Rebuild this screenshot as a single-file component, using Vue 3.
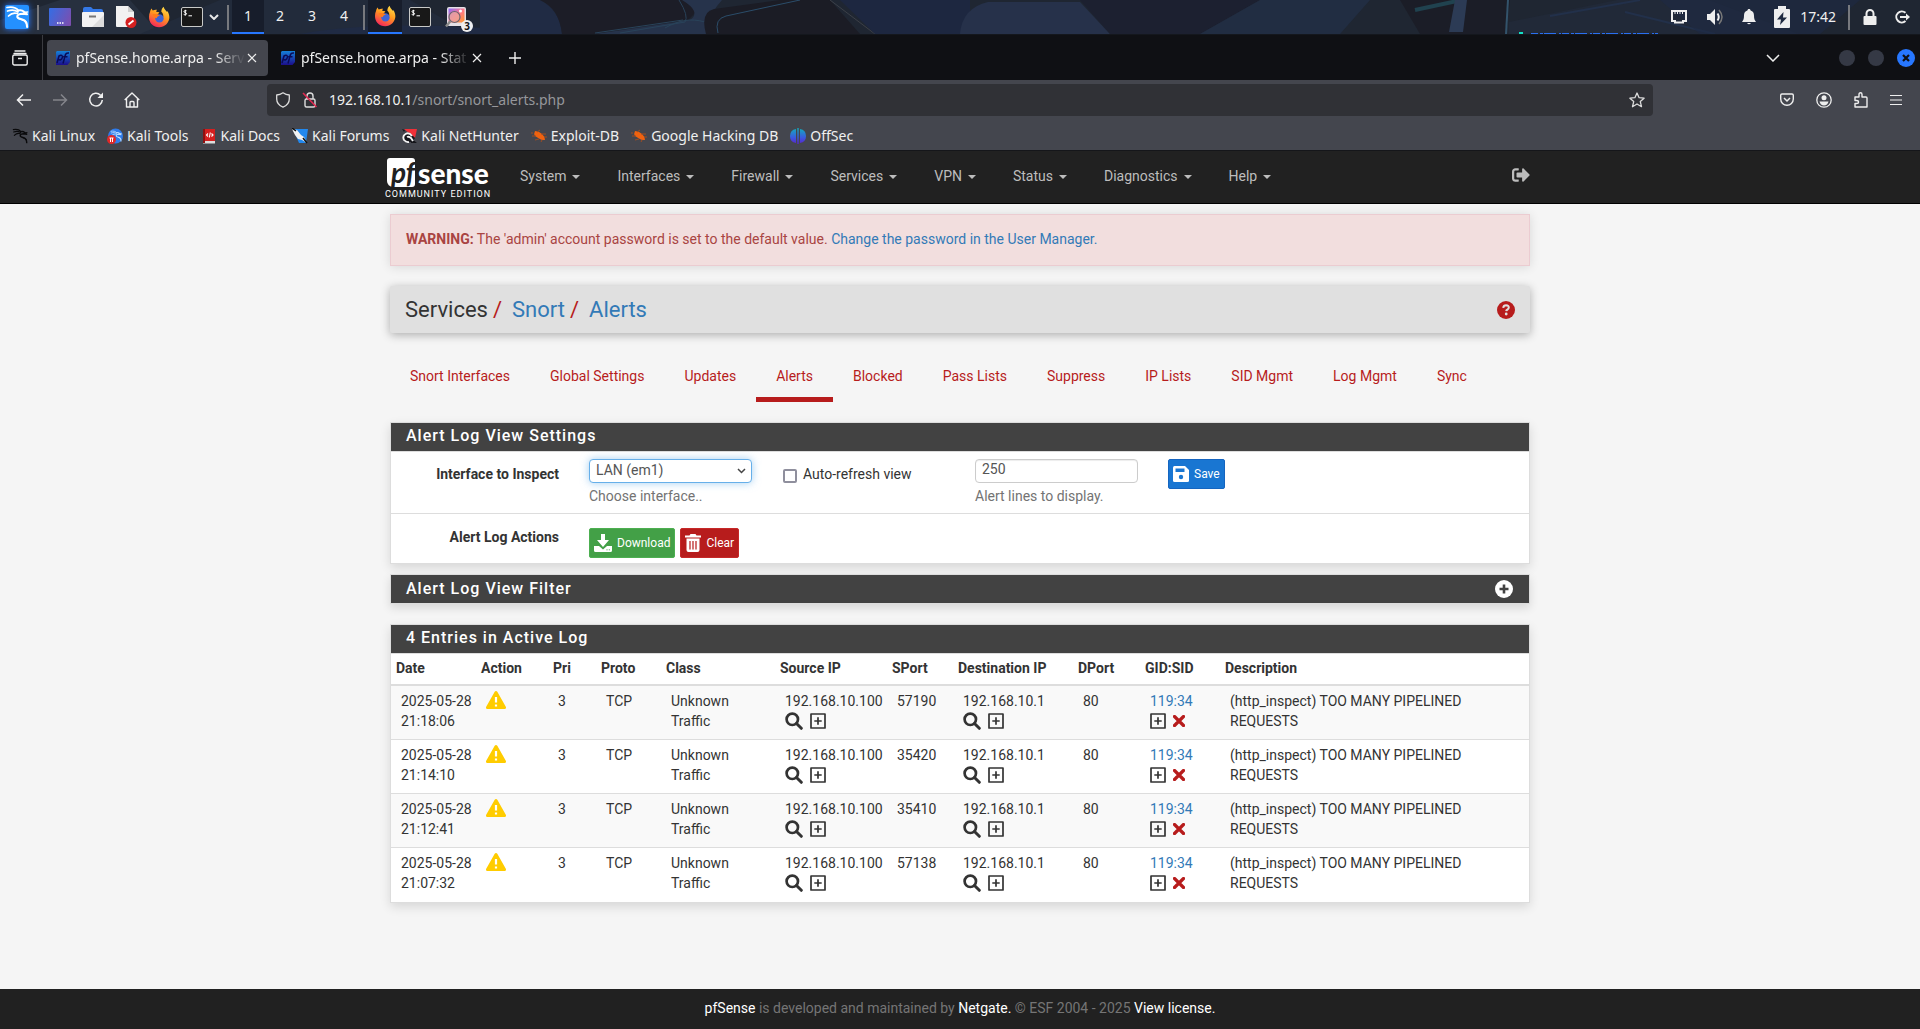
<script setup>
import { ref } from 'vue'

const workspaces = [1, 2, 3, 4]
const tabs = ref([
  { title: 'pfSense.home.arpa - Serv', active: true },
  { title: 'pfSense.home.arpa - Stat', active: false },
])
const bookmarks = [
  { label: 'Kali Linux', icon: 'dragon' },
  { label: 'Kali Tools', icon: 'tools' },
  { label: 'Kali Docs', icon: 'docs' },
  { label: 'Kali Forums', icon: 'forums' },
  { label: 'Kali NetHunter', icon: 'nethunter' },
  { label: 'Exploit-DB', icon: 'bug' },
  { label: 'Google Hacking DB', icon: 'bug' },
  { label: 'OffSec', icon: 'offsec' },
]
const menus = ['System', 'Interfaces', 'Firewall', 'Services', 'VPN', 'Status', 'Diagnostics', 'Help']
const sections = ['Snort Interfaces', 'Global Settings', 'Updates', 'Alerts', 'Blocked', 'Pass Lists', 'Suppress', 'IP Lists', 'SID Mgmt', 'Log Mgmt', 'Sync']
const columns = [
  { name: 'Date', width: 85 },
  { name: 'Action', width: 72 },
  { name: 'Pri', width: 48 },
  { name: 'Proto', width: 65 },
  { name: 'Class', width: 114 },
  { name: 'Source IP', width: 112 },
  { name: 'SPort', width: 66 },
  { name: 'Destination IP', width: 120 },
  { name: 'DPort', width: 67 },
  { name: 'GID:SID', width: 80 },
  { name: 'Description', width: 0 },
]
const alerts = [
  { time: '21:18:06', sport: 57190 },
  { time: '21:14:10', sport: 35420 },
  { time: '21:12:41', sport: 35410 },
  { time: '21:07:32', sport: 57138 },
]
const iface = ref('LAN (em1)')
const lines = ref('250')
const autoRefresh = ref(false)
</script>

<template>
  <svg class="defs" width="0" height="0" aria-hidden="true">
    <defs>
      <linearGradient id="gFox" x1="0.8" y1="0" x2="0.3" y2="1">
        <stop offset="0" stop-color="#ffe14a" /><stop offset="0.45" stop-color="#ff9a1f" /><stop offset="1" stop-color="#f5245c" />
      </linearGradient>
      <linearGradient id="gDesk" x1="0" y1="0.3" x2="1" y2="0.7">
        <stop offset="0" stop-color="#3a6be0" /><stop offset="1" stop-color="#7a4fb0" />
      </linearGradient>
      <linearGradient id="gPf" x1="0" y1="0" x2="0" y2="1">
        <stop offset="0" stop-color="#1580d8" /><stop offset="1" stop-color="#1c0e8c" />
      </linearGradient>
      <linearGradient id="gOff" gradientUnits="userSpaceOnUse" x1="0" y1="0" x2="0" y2="16">
        <stop offset="0" stop-color="#12aebb" /><stop offset="0.6" stop-color="#3a5ae0" /><stop offset="1" stop-color="#5a22cc" />
      </linearGradient>
      <linearGradient id="gPhoto" x1="0" y1="0" x2="1" y2="1">
        <stop offset="0" stop-color="#8a6bff" /><stop offset="0.5" stop-color="#ff7a8c" /><stop offset="1" stop-color="#ff9a2a" />
      </linearGradient>
      <symbol id="dragon" viewBox="0 0 24 24">
        <g fill="none" stroke="currentColor" stroke-width="1.700" stroke-linecap="round" stroke-linejoin="round">
          <path d="M2 2.500c5-1 9 0 11.500 3" />
          <path d="M2.500 6c4-1.500 8-1 10.500 1" />
          <path d="M3.500 11c3-3 6-3.500 9-2.500" />
          <path d="M13 5.500c2.500-.6 4.500-.2 6 1.200l3 2.600-4.500-.6c-2.500.2-4.800.4-5.200 2.400-.4 2.400 2.500 2.800 5 3.400 3 .8 4.700 3 4.800 7.500" stroke-width="2.100" />
          <path d="M19.500 7.500l3-.5M17 14.800c2 .5 3.800 1.500 4.600 3" />
        </g>
      </symbol>
      <symbol id="firefox" viewBox="0 0 24 24">
        <path fill="url(#gFox)" d="M2.200 6.500c.3-1.800 1.200-3 2-3.700.1 1 .5 1.700 1 2.200C7 3.800 9 4 10 4.200 9.300 5 8.900 5.700 8.900 6.300c1 .4 2.300.3 3.400.4-.2 1.200-1 1.900-2.300 2.500 1.200 0 2.400.4 3 1.400 1 0 2.600.4 3.500 1.700C17 9 16 7.500 14.500 6.200 14.600 3.800 15.600 1.900 17 .8c.5 2.700 2.300 3.600 3.800 5.800.2-.6.200-1 .1-1.500 3.200 4.600 3.500 10.400-.8 14.800-4.500 4.500-12.100 4.300-16.300-.3C.700 16.200.400 10.500 2.200 6.500Z" />
        <circle cx="12.500" cy="13.500" r="4.600" fill="#3d63d6" />
        <path fill="#ff7a1a" d="M5 9c2.500-.8 6-.2 8 1.700-2 .4-3.200 1.200-3.500 2.600-2.300-.2-4-1.800-4.500-4.300Z" />
      </symbol>
      <symbol id="terminal" viewBox="0 0 22 20">
        <rect x=".5" y=".5" width="21" height="19" rx="1.500" fill="#181818" stroke="#c9cac8" />
        <path d="M5.500 3.800C4.800 3.400 3 3.500 3 4.600c0 1.300 2.600.8 2.600 2.100 0 1.200-1.900 1.300-2.900.7M4.300 2.800v5.800M7.500 8.800H11" fill="none" stroke="#fff" stroke-width="1" />
      </symbol>
      <symbol id="pf" viewBox="0 0 16 16">
        <path d="M2 1h13v11l-2.500 3H1V2z" fill="url(#gPf)" />
        <path d="M2 13l2-7c2-1.300 4-.8 3.300 1.600C6.700 10 5 10.300 3.500 9.500M8 13.500l2-7.300C10.500 3.500 12 2.600 14 3M8.200 6.800h4.300" fill="none" stroke="#0a0a55" stroke-width="1.500" />
      </symbol>
      <symbol id="plusbox" viewBox="0 0 16 16">
        <path d="M1 1h14v14H1zM8 4.300v7.400M4.300 8h7.400" fill="none" stroke="currentColor" stroke-width="1.700" stroke-linejoin="round" />
      </symbol>
      <symbol id="search" viewBox="0 0 18 18">
        <circle cx="7.300" cy="7.300" r="5.700" fill="none" stroke="currentColor" stroke-width="2.700" />
        <path d="M11.500 11.500l4.800 4.800" stroke="currentColor" stroke-width="3" stroke-linecap="round" />
      </symbol>
      <symbol id="warn" viewBox="0 0 20 18">
        <path fill="#fc0" d="M8.700.8c.6-1 2-1 2.600 0l8.500 14.900c.6 1-.1 2.300-1.300 2.300h-17C.300 18-.400 16.700.200 15.700z" />
        <path d="M10 6v5.600M10 13.400v2" stroke="#fff" stroke-width="2.200" />
      </symbol>
    </defs>
  </svg>

  <div class="screen">
    <header class="panel">
      <svg class="wallpaper" viewBox="0 0 1920 34" preserveAspectRatio="xMidYMid slice" aria-hidden="true">
        <rect width="1920" height="34" fill="#1f2632" />
        <path d="M60 0h70l30 34H0V20z" fill="#27303f" />
        <path d="M140 34L220 0h190l60 34z" fill="#222b3b" />
        <path d="M300 34C380 20 470 26 560 34H300zM480 0h60q20 10 22 34h-82z" fill="#202b44" />
        <path d="M540 0h170q-10 8-22 20l-95 14h-31q-3-26-22-34z" fill="#1c1d27" />
        <path d="M595 34l95-14q12-8-8-20h40q-12 12-15 34z" fill="#26334b" />
        <path d="M595 33l88-13M620 33l65-11q4-6-6-22M665 28c14-8 26-10 40-6" fill="none" stroke="#29435a" />
        <path d="M706 34q-6-22 8-25L780 0h50l30 34z" fill="#1b1c25" />
        <path d="M718 33q-4-14 8-17L800 0" fill="none" stroke="#2b4d6a" />
        <path d="M830 0l45 34M845 0l32 24" stroke="#3c4048" />
        <path d="M840 0h130v34h-95z" fill="#1d2740" />
        <path d="M960 34q2-26 28-32h92l30 32z" fill="#26314a" />
        <path d="M1080 0h180l-60 34h-90z" fill="#1c2030" />
        <path d="M1260 0h110l-30 34h-140z" fill="#212d42" />
        <path d="M1400 0h110l-4 34h-86z" fill="#1b1d27" />
        <path d="M1415 10l42-9" stroke="#20424f" stroke-width="4" />
        <path d="M1449 32l6-32h12l-4 32z" fill="#2c3b55" />
        <path d="M1508 0l-2 34" stroke="#33536b" stroke-width="2" />
        <path d="M1509 22l108-22h92l90 34h-290z" fill="#212938" />
        <path d="M1550 16l90-16M1625 12l90 22" stroke="#22304a" stroke-width="2" />
        <path d="M1660 0h200l-40 34h-120z" fill="#1e2a44" opacity=".6" />
        <path d="M1519 33h4" stroke="#15e0c5" stroke-width="2" />
        <path d="M1531 33.500h127" stroke="#2a6ff0" stroke-dasharray="7 2 3 1 12 3 2 1" />
      </svg>
      <div class="panel-row">
        <button class="kali" aria-label="Applications"><svg width="24" height="24"><use href="#dragon" /></svg></button>
        <i class="rule first"></i>
        <button class="launcher" aria-label="Show desktop">
          <svg width="22" height="18" viewBox="0 0 22 18"><rect width="22" height="18" rx="1" fill="url(#gDesk)" /><path d="M8 15h1.500M10.500 15H12M13 15h1.500" stroke="#fff" stroke-width="1.500" /></svg>
        </button>
        <button class="launcher" aria-label="Files">
          <svg width="22" height="20" viewBox="0 0 22 20"><path d="M1 2q0-2 2-2h6l2 2h8q2 0 2 2v4H1z" fill="#3478e6" /><rect y="5" width="22" height="15" rx="1" fill="#f2f2f2" /><path d="M22 8v12H10z" fill="#dcdcdc" /><path d="M7 9.500h7" stroke="#777" stroke-width="2" /></svg>
        </button>
        <button class="launcher" aria-label="Text editor">
          <svg width="22" height="22" viewBox="0 0 22 22"><path d="M1 0h12l6 6v14q0 1-1 1H2q-1 0-1-1z" fill="#f2f2f2" /><path d="M13 0v6h6" fill="#cfcfcf" /><circle cx="16" cy="16.500" r="5.500" fill="#d42020" /><path d="M13.500 18.500l5-4" stroke="#fff" stroke-width="1.800" /></svg>
        </button>
        <button class="launcher" aria-label="Firefox"><svg width="22" height="22"><use href="#firefox" /></svg></button>
        <button class="launcher" aria-label="Terminal"><svg width="22" height="20"><use href="#terminal" /></svg></button>
        <button class="more" aria-label="More launchers"><svg width="10" height="6" viewBox="0 0 10 6"><path d="M1 1l4 4 4-4" fill="none" stroke="#e8e8e8" stroke-width="2" /></svg></button>
        <i class="rule"></i>
        <nav class="spaces">
          <button v-for="n in workspaces" :key="n" :class="{ on: n === 1 }">{{ n }}</button>
        </nav>
        <i class="rule"></i>
        <button class="task on" aria-label="Firefox window"><svg width="22" height="22"><use href="#firefox" /></svg></button>
        <button class="task" aria-label="Terminal window"><svg width="22" height="20"><use href="#terminal" /></svg></button>
        <button class="task shots" aria-label="Image viewer">
          <svg width="22" height="22" viewBox="0 0 22 22"><rect x="2" y="1" width="19" height="19" rx="2" fill="#e4e0e6" /><rect x="3.500" y="2.500" width="16" height="14" fill="url(#gPhoto)" /><circle cx="15.500" cy="5" r="1.500" fill="#fff" /><circle cx="9.500" cy="11" r="5.500" fill="#e8a9a0" fill-opacity=".7" stroke="#6b6570" stroke-width="1.200" /><path d="M5.500 15L1 20.500" stroke="#8a8a8a" stroke-width="2.500" /></svg>
          <span class="count">3</span>
        </button>
        <div class="tray">
          <svg width="18" height="14" viewBox="0 0 18 14"><path d="M2 1h14v10h-3v1.500H5V11H2z" fill="none" stroke="#eee" stroke-width="2" /><path d="M5 2v2M7.500 2v2M10 2v2M12.500 2v2" stroke="#eee" /></svg>
          <svg width="18" height="18" viewBox="0 0 18 18"><path d="M1 6h3l5-5v16l-5-5H1z" fill="#eee" /><path d="M11.500 5.500q2.500 3.500 0 7" fill="none" stroke="#eee" stroke-width="2" /><path d="M13 2q6 7 0 14" fill="none" stroke="#777" stroke-width="1.500" /></svg>
          <svg width="14" height="16" viewBox="0 0 14 16"><path d="M7 0c1 0 1.500.6 1.600 1.500C11 2 12 4 12 6.500c0 3 .5 4.500 2 6.500H0c1.500-2 2-3.500 2-6.500C2 4 3 2 5.400 1.500 5.500.6 6 0 7 0zM5 14h4q-2 2.500-4 0z" fill="#eee" /></svg>
          <svg width="16" height="22" viewBox="0 0 16 22"><path d="M4 0h8v3h3q1 0 1 1v17q0 1-1 1H1q-1 0-1-1V4q0-1 1-1h3z" fill="#eee" /><path d="M9.500 6L3 13.500h4L6 19l7-7.500H9z" fill="#1f2a40" /></svg>
          <time>17:42</time>
          <i class="rule"></i>
          <svg width="14" height="16" viewBox="0 0 14 16"><rect x=".5" y="7" width="13" height="9" rx="1" fill="#eee" /><path d="M3.500 8V4.500a3.500 3.500 0 017 0V8" fill="none" stroke="#eee" stroke-width="2" /></svg>
          <svg width="16" height="14" viewBox="0 0 16 14"><path d="M10.500 2.800A5.500 5.500 0 1010.500 11" fill="none" stroke="#eee" stroke-width="2" /><path d="M5 7h8" stroke="#eee" stroke-width="2" /><path d="M11 3.500L15 7l-4 3.500z" fill="#eee" /></svg>
        </div>
      </div>
    </header>

    <div class="tabstrip">
      <button class="recent" aria-label="Recent browsing">
        <svg width="16" height="16" viewBox="0 0 16 16"><path d="M3 1h10M2 3.500h12" fill="none" stroke="#eee" stroke-width="1.300" stroke-linecap="round" /><rect x=".8" y="5" width="14.400" height="10" rx="1.500" fill="none" stroke="#eee" stroke-width="1.400" /><path d="M6 8.500h4" stroke="#eee" stroke-width="1.500" /></svg>
      </button>
      <div v-for="t in tabs" :key="t.title" class="tab" :class="{ active: t.active }">
        <svg width="16" height="16"><use href="#pf" /></svg>
        <span class="tab-title">{{ t.title }}</span>
        <button class="close" aria-label="Close tab"><svg width="10" height="10" viewBox="0 0 10 10"><path d="M1 1l8 8M9 1L1 9" stroke="#eee" stroke-width="1.200" /></svg></button>
      </div>
      <button class="newtab" aria-label="New tab"><svg width="12" height="12" viewBox="0 0 12 12"><path d="M6 0v12M0 6h12" stroke="#eee" stroke-width="1.400" /></svg></button>
      <div class="window-controls">
        <button class="alltabs" aria-label="List all tabs"><svg width="14" height="8" viewBox="0 0 14 8"><path d="M1 1l6 6 6-6" fill="none" stroke="#eee" stroke-width="1.500" /></svg></button>
        <button class="dot" aria-label="Minimize"></button>
        <button class="dot" aria-label="Maximize"></button>
        <button class="dot shut" aria-label="Close"><svg width="8" height="8" viewBox="0 0 8 8"><path d="M1 1l6 6M7 1L1 7" stroke="#0f1014" stroke-width="2.200" /></svg></button>
      </div>
    </div>

    <div class="toolbar">
      <div class="nav-buttons">
        <button aria-label="Back"><svg width="16" height="16" viewBox="0 0 16 16"><path d="M15 8H2M7 2.500L1.500 8 7 13.500" fill="none" stroke="#f0f0f0" stroke-width="1.500" /></svg></button>
        <button aria-label="Forward"><svg width="16" height="16" viewBox="0 0 16 16"><path d="M1 8h13M9 2.500L14.500 8 9 13.500" fill="none" stroke="#84858b" stroke-width="1.500" /></svg></button>
        <button aria-label="Reload"><svg width="16" height="16" viewBox="0 0 16 16"><path d="M12.500 3.200A6.300 6.300 0 1014.300 8" fill="none" stroke="#f0f0f0" stroke-width="1.500" /><path d="M15 .5v5.500H9.500z" fill="#f0f0f0" /></svg></button>
        <button aria-label="Home"><svg width="16" height="16" viewBox="0 0 16 16"><path d="M.7 8L8 1l7.300 7M2.500 6.500V15h11V6.500M6 15v-4.500q0-1 1-1h2q1 0 1 1V15" fill="none" stroke="#f0f0f0" stroke-width="1.400" stroke-linejoin="round" /></svg></button>
      </div>
      <div class="urlbar">
        <svg width="16" height="16" viewBox="0 0 16 16"><path d="M8 .8q3 2 6.300 2.200v4q0 5.500-6.300 8.200Q1.700 12.500 1.700 7V3Q5 2.800 8 .8z" fill="none" stroke="#ddd" stroke-width="1.300" stroke-linejoin="round" /></svg>
        <svg width="16" height="16" viewBox="0 0 16 16"><rect x="3" y="7" width="10" height="8" rx="1.500" fill="none" stroke="#ddd" stroke-width="1.400" /><path d="M5 7V4a3 3 0 016 0v3" fill="none" stroke="#ddd" stroke-width="1.400" /><path d="M1 1l13.500 14" stroke="#e22850" stroke-width="1.600" /></svg>
        <p class="address">192.168.10.1<span>/snort/snort_alerts.php</span></p>
        <button aria-label="Bookmark this page"><svg width="16" height="16" viewBox="0 0 16 16"><path d="M8 1l2.100 4.700 5 .5-3.800 3.400 1.200 5.100L8 12l-4.500 2.700 1.200-5.100L.9 6.200l5-.5z" fill="none" stroke="#ddd" stroke-width="1.300" stroke-linejoin="round" /></svg></button>
      </div>
      <div class="actions">
        <button aria-label="Save to Pocket"><svg width="14" height="14" viewBox="0 0 14 14"><path d="M2 1h10q1.300 0 1.300 1.300V6a6.300 6.300 0 01-12.600 0V2.300Q.7 1 2 1z" fill="none" stroke="#eee" stroke-width="1.400" /><path d="M4 5l3 3 3-3" fill="none" stroke="#eee" stroke-width="1.500" /></svg></button>
        <button aria-label="Account"><svg width="16" height="16" viewBox="0 0 16 16"><circle cx="8" cy="8" r="7.200" fill="none" stroke="#eee" stroke-width="1.300" /><circle cx="8" cy="5.800" r="2.500" fill="#eee" /><path d="M3.500 9.500h9q-1 4-4.500 4t-4.500-4z" fill="#eee" /></svg></button>
        <button aria-label="Extensions"><svg width="14" height="16" viewBox="0 0 14 16"><path d="M1 5h4V2.500q0-1.700 1.500-1.700T8 2.500V5h4q1 0 1 1v9H1v-3.500h1.500Q4.500 11.500 4.500 10T2.500 8.500H1z" fill="none" stroke="#eee" stroke-width="1.400" stroke-linejoin="round" /></svg></button>
        <button aria-label="Menu"><svg width="12" height="12" viewBox="0 0 12 12"><path d="M0 1.500h12M0 6h12M0 10.500h12" stroke="#eee" stroke-width="1.200" /></svg></button>
      </div>
    </div>

    <nav class="bookmarks">
      <a v-for="b in bookmarks" :key="b.label" href="#">
        <svg width="16" height="16" viewBox="0 0 16 16">
          <use v-if="b.icon === 'dragon'" href="#dragon" width="16" height="16" color="#0a0a0c" />
          <template v-else-if="b.icon === 'tools'">
            <circle cx="8.500" cy="8" r="7.500" fill="#2f7bea" />
            <use href="#dragon" x="3" y="2" width="12" height="12" color="#b8dcff" />
            <circle cx="4.500" cy="11.500" r="4.500" fill="#e02828" /><path d="M2.500 10h4M3.500 10v4M5.500 10v4" stroke="#fff" fill="none" />
          </template>
          <template v-else-if="b.icon === 'docs'">
            <path d="M2 1h12v14H2z" fill="#d51f1f" /><path d="M2 13h12v2.500H2z" fill="#ddd" /><path d="M2 1h2v14H2z" fill="#8c1111" />
            <path d="M7 5.500L5.500 7 7 8.500M10.500 5.500L12 7l-1.500 1.500M9.300 4.500L8.300 9.500" fill="none" stroke="#fff" stroke-width="1.100" />
          </template>
          <template v-else-if="b.icon === 'forums'">
            <path d="M1 1h15l-2 14H7z" fill="#2288ee" /><path d="M0 1l5 1 4 5 3 2 3 6-5-3-4-1-3-4z" fill="#f2f2f2" /><path d="M0 0l4 3M11 10l4 5" stroke="#111" stroke-width="1.500" />
          </template>
          <template v-else-if="b.icon === 'nethunter'">
            <path d="M3 1h13l-2 9z" fill="#f03038" /><path d="M1 1l3 1-1 2zM10 10l6 5h-6z" fill="#15151a" /><path d="M11 14H4Q0 11 2 7q3-4 7-2l5 5z" fill="#15151a" /><path d="M11 8Q8 4 4.500 6T3 12q2 2.500 5 2M6 9q2-1 4 1l2 3" fill="none" stroke="#f5f5f5" stroke-width="1.900" />
          </template>
          <template v-else-if="b.icon === 'bug'">
            <path d="M4 3q4 0 7 3 3 2.500 3 6-3 .5-6-1.500L4 8Q2.500 5.500 4 3z" fill="#f0620f" /><path d="M6 4l3-2M10 6l5 0M13 9h3M5 8L1 8M8 11l-4 1M2 5H0M11 12l-1 2" stroke="#a04c20" />
          </template>
          <g v-else fill="url(#gOff)">
            <path d="M6 .9v14.200Q0 14 0 8T6 .900z" /><path d="M10 .9v14.200Q16 14 16 8T10 .900z" /><rect x="7.300" width="1.400" height="16" />
          </g>
        </svg>
        {{ b.label }}
      </a>
    </nav>

    <div class="page">
      <header class="navbar">
        <div class="container nav-inner">
          <a class="brand" href="#">
            <span class="wordmark"><span class="pf">pf</span><span class="sense">sense</span></span>
            <span class="edition">COMMUNITY EDITION</span>
          </a>
          <nav class="menu">
            <a v-for="m in menus" :key="m" href="#">{{ m }}<i class="caret"></i></a>
          </nav>
          <a class="logout" href="#" aria-label="Logout">
            <svg width="18" height="18" viewBox="0 0 512 512"><path fill="#bdbdbd" d="M497 273L329 441c-15 15-41 4.500-41-17v-96H152c-13.300 0-24-10.700-24-24v-96c0-13.300 10.700-24 24-24h136V88c0-21.400 25.900-32 41-17l168 168c9.300 9.400 9.300 24.600 0 34zM192 436v-40c0-6.600-5.400-12-12-12H96c-17.700 0-32-14.300-32-32V160c0-17.700 14.300-32 32-32h84c6.600 0 12-5.400 12-12V76c0-6.600-5.400-12-12-12H96c-53 0-96 43-96 96v192c0 53 43 96 96 96h84c6.600 0 12-5.400 12-12z" /></svg>
          </a>
        </div>
      </header>

      <main class="container">
        <div class="alert" role="alert"><strong>WARNING:</strong> The 'admin' account password is set to the default value. <a href="#">Change the password in the User Manager.</a></div>

        <div class="crumbs">
          <h1>Services<i>/</i><a href="#">Snort</a><i>/</i><a href="#">Alerts</a></h1>
          <a href="#" aria-label="Help"><svg width="18" height="18" viewBox="0 0 18 18"><circle cx="9" cy="9" r="9" fill="#b71c1c" /><path d="M6.200 6.800q.3-2.500 2.900-2.500 2.700.1 2.700 2.300 0 1.200-1.300 1.900-1.200.6-1.300 1.700" fill="none" stroke="#e0e0e0" stroke-width="2" /><circle cx="9.200" cy="13" r="1.400" fill="#e0e0e0" /></svg></a>
        </div>

        <nav class="sections">
          <a v-for="s in sections" :key="s" href="#" :class="{ active: s === 'Alerts' }">{{ s }}</a>
        </nav>

        <section class="card">
          <h2>Alert Log View Settings</h2>
          <div class="form-row">
            <label class="row-label" for="iface">Interface to Inspect</label>
            <div class="cell">
              <div class="select-wrap">
                <select id="iface" v-model="iface"><option>LAN (em1)</option></select>
                <svg width="9" height="6" viewBox="0 0 9 6"><path d="M1 1l3.500 3.500L8 1" fill="none" stroke="#444" stroke-width="1.500" /></svg>
              </div>
              <p>Choose interface..</p>
            </div>
            <div class="cell"><label class="check"><input v-model="autoRefresh" type="checkbox">Auto-refresh view</label></div>
            <div class="cell">
              <input id="lines" v-model="lines" class="text" type="text" aria-describedby="lines-help">
              <label id="lines-help" for="lines" class="help">Alert lines to display.</label>
            </div>
            <div class="cell">
              <button class="btn save"><svg width="16" height="16" viewBox="0 0 16 16"><path d="M1.500 0H12l4 4v10.500q0 1.500-1.500 1.500h-13Q0 16 0 14.500v-13Q0 0 1.500 0z" fill="#fff" /><path d="M2.500 2.500h9V6h-9z" fill="#1976d2" /><circle cx="8" cy="11" r="2.200" fill="#1976d2" /></svg>Save</button>
            </div>
          </div>
          <div class="form-row second">
            <span class="row-label">Alert Log Actions</span>
            <div class="cell buttons">
              <button class="btn download"><svg width="18" height="18" viewBox="0 0 18 18"><path d="M7 0h4v6h4l-6 7-6-7h4z" fill="#fff" /><path d="M0 12h5l4 3.500L13 12h5v4.500q0 1.500-1.500 1.500h-15Q0 18 0 16.500z" fill="#fff" /><path d="M12.500 15.800h1M14.800 15.800h1" stroke="#43a047" /></svg>Download</button>
              <button class="btn clear"><svg width="16" height="18" viewBox="0 0 16 18"><path d="M5.500 0h5l1 1.500H16v2H0v-2h4.500zM1.500 4.500h13V16q0 2-2 2h-9q-2 0-2-2z" fill="#fff" /><path d="M5 7v8.500M8 7v8.500M11 7v8.500" stroke="#b71c1c" stroke-width="1.200" /></svg>Clear</button>
            </div>
          </div>
        </section>

        <section class="card filter">
          <h2>Alert Log View Filter
            <button aria-label="Expand filter"><svg width="18" height="18" viewBox="0 0 18 18"><circle cx="9" cy="9" r="9" fill="#fff" /><path d="M9 4.500v9M4.500 9h9" stroke="#424242" stroke-width="2.600" /></svg></button>
          </h2>
        </section>

        <section class="card">
          <h2>4 Entries in Active Log</h2>
          <table>
            <colgroup><col v-for="c in columns" :key="c.name" :style="c.width ? { width: c.width + 'px' } : {}"></colgroup>
            <thead><tr><th v-for="c in columns" :key="c.name">{{ c.name }}</th></tr></thead>
            <tbody>
              <tr v-for="a in alerts" :key="a.time">
                <td>2025-05-28<br>{{ a.time }}</td>
                <td><svg width="20" height="18"><use href="#warn" /></svg></td>
                <td>3</td>
                <td>TCP</td>
                <td>Unknown<br>Traffic</td>
                <td>192.168.10.100<span class="icons"><svg width="18" height="18"><use href="#search" /></svg><svg width="16" height="16"><use href="#plusbox" /></svg></span></td>
                <td>{{ a.sport }}</td>
                <td>192.168.10.1<span class="icons"><svg width="18" height="18"><use href="#search" /></svg><svg width="16" height="16"><use href="#plusbox" /></svg></span></td>
                <td>80</td>
                <td><a href="#">119:34</a><span class="icons"><svg width="16" height="16"><use href="#plusbox" /></svg><svg width="12" height="12" viewBox="0 0 12 12"><path d="M1.500 1.500l9 9M10.500 1.500l-9 9" stroke="#b71c1c" stroke-width="3.200" stroke-linecap="round" /></svg></span></td>
                <td>(http_inspect) TOO MANY PIPELINED REQUESTS</td>
              </tr>
            </tbody>
          </table>
        </section>
      </main>

      <footer><a href="#">pfSense</a> is developed and maintained by <a href="#">Netgate.</a> © ESF 2004 - 2025 <a href="#">View license.</a></footer>
    </div>
  </div>
</template>

<style>
body { margin: 0; background: #f5f5f5; }
</style>

<style scoped>
* { box-sizing: border-box; }
button { padding: 0; border: 0; background: none; color: inherit; font: inherit; display: flex; align-items: center; justify-content: center; }
a { text-decoration: none; }
svg { display: block; flex: none; }
.defs { position: absolute; }
.screen { min-height: 100vh; display: flex; flex-direction: column; font: 14px/20px "Noto Sans", sans-serif; color: #f0f0f0; }

.panel { position: relative; height: 35px; background: #1f2632; overflow: hidden; border-bottom: 1px solid #14171d; }
.wallpaper { position: absolute; inset: 0; width: 100%; height: 100%; }
.panel-row { position: relative; display: flex; align-items: center; height: 34px; padding-left: 5px; }
.kali { width: 24px; height: 24px; border-radius: 2px; background: #2490ff; box-shadow: 0 0 6px #2777ff; color: #fff; }
.rule { width: 2px; height: 25px; background: #77797e; margin: 0 3px; }
.rule.first { margin: 0 4px 0 8px; }
.launcher { width: 33px; height: 34px; }
.task { width: 34px; height: 34px; }
.more { width: 10px; margin: 0 5px 0 1px; }
.spaces { display: flex; }
.spaces button { width: 32px; height: 34px; border-bottom: 2px solid transparent; }
.spaces .on, .task.on { background: #171d2b; border-bottom: 2px solid #2777ff; }
.shots { position: relative; }
.task:not(.on) { width: 36px; }
.count { position: absolute; right: 1px; bottom: 2px; width: 12px; height: 12px; border-radius: 50%; background: #eee; color: #111; font-size: 10px; line-height: 12px; font-weight: 700; }
.tray { margin-left: auto; display: flex; align-items: center; padding-right: 9px; gap: 18px; }
.tray time { margin: 0 -8px; }
.tray .rule { margin: 0 -5px 0 2px; }

.tabstrip { height: 45px; background: #0f1014; display: flex; align-items: center; }
.recent { width: 43px; height: 45px; padding-right: 3px; border-right: 1px solid #3a3b40; margin-right: 4px; }
.tab { display: flex; align-items: center; width: 221px; height: 36px; border-radius: 4px; padding: 0 11px 0 8px; margin-right: 4px; }
.tab.active { background: #44464e; }
.tab-title { flex: 1; margin: 0 2px 0 5px; white-space: nowrap; mask-image: linear-gradient(to right, #000 82%, transparent 100%); }
.newtab { width: 34px; margin-left: 1px; }
.window-controls { margin-left: auto; display: flex; align-items: center; gap: 13px; padding-right: 5px; }
.alltabs { margin-right: 46px; }
.dot { width: 16px; height: 16px; border-radius: 50%; background: #353945; }
.dot.shut { width: 18px; height: 18px; background: #2777ff; }

.toolbar { height: 40px; background: #44464e; display: flex; align-items: center; }
.nav-buttons { display: flex; gap: 20px; width: 267px; padding-left: 16px; flex: none; }
.urlbar { flex: 1; height: 32px; background: #303136; border-radius: 4px; display: flex; align-items: center; padding: 0 8px; gap: 11px; }
.address { flex: 1; margin: 0; }
.address span { color: #96979b; }
.actions { display: flex; align-items: center; gap: 22px; flex: none; width: 267px; justify-content: flex-end; padding-right: 18px; }
.bookmarks { height: 31px; background: #44464e; border-bottom: 1px solid #15161a; display: flex; align-items: center; gap: 12px; padding: 1px 0 0 12px; }
.bookmarks a { color: inherit; display: flex; align-items: center; gap: 4px; white-space: nowrap; }

.page { flex: 1; display: flex; flex-direction: column; background: #f5f5f5; color: #333; font-family: Roboto, sans-serif; }
.container { width: 1140px; max-width: 100%; margin: 0 auto; }
.navbar { background: #212121; border-bottom: 1px solid #000; }
.nav-inner { height: 52px; display: flex; }
.brand { width: 110px; margin-left: -5px; color: #fff; display: flex; flex-direction: column; align-items: flex-start; padding-top: 7px; flex: none; }
.wordmark { display: flex; height: 30px; margin-left: 2px; }
.pf { width: 28px; height: 29px; border-radius: 3px 3px 3px 6px; background: #fff; color: #212121; font: italic 700 28px/28px Lato, sans-serif; text-align: right; }
.sense { font: 900 28px/30px Lato, sans-serif; margin-left: 3px; }
.edition { font-size: 9px; line-height: 11px; letter-spacing: 1px; margin-top: 1px; white-space: nowrap; }
.menu { display: flex; margin-left: 7px; }
.menu a { color: #bdbdbd; padding: 15px 19px 0 18px; display: flex; white-space: nowrap; }
.caret { border: 4px solid transparent; border-top-color: #bdbdbd; border-bottom: 0; margin: 9px 0 0 6px; width: 8px; height: 4px; }
.logout { margin: 15px 0 0 auto; }

main a { color: #337ab7; }
.alert { margin-top: 10px; height: 52px; padding: 14px 15px; border: 1px solid #ebccd1; background: #f2dede; color: #a94442; box-shadow: 0 1px 10px rgba(0,0,0,.12); }
.crumbs { margin-top: 20px; height: 47px; padding: 0 15px; background: #e0e0e0; border-radius: 2px; box-shadow: 0 2px 10px rgba(0,0,0,.3); display: flex; align-items: center; justify-content: space-between; }
.crumbs h1 { margin: 0; font-size: 22px; line-height: 30px; font-weight: 400; }
.crumbs i { color: #b71c1c; font-style: normal; margin: 0 10px 0 5px; }
.sections { display: flex; margin-top: 28px; height: 41px; }
.sections a { color: #b71c1c; padding: 5px 20px 0; white-space: nowrap; }
.sections .active { border-bottom: 5px solid #b71c1c; }

.card { margin-top: 20px; border: 1px solid #ddd; background: #fff; box-shadow: 0 4px 10px rgba(0,0,0,.12); }
.card h2 { margin: 0; height: 29px; padding: 0 16px 2px 15px; background: #424242; border-bottom: 1px solid #ddd; color: #fff; font-size: 16px; line-height: 26px; font-weight: 500; letter-spacing: 1px; display: flex; align-items: center; justify-content: space-between; }
.filter { margin-top: 10px; }
.card.filter h2 { height: 28px; border: 0; padding-bottom: 1px; }
.form-row { display: grid; grid-template-columns: 183px repeat(3, 193px) 1fr; padding-top: 7px; height: 62px; border-bottom: 1px solid #ddd; }
.form-row.second { grid-template-columns: 183px 1fr; padding-top: 14px; height: 49px; border: 0; }
.row-label { font-weight: 700; text-align: right; padding: 5px 15px 0 0; }
.second .row-label { padding-top: 0; line-height: 18px; }
.cell { padding: 0 15px; color: #737373; }
.cell p, .help { display: block; margin: 3px 0 0; }
.select-wrap { display: grid; align-items: center; }
.select-wrap > * { grid-area: 1 / 1; }
.select-wrap svg { justify-self: end; margin-right: 6px; pointer-events: none; }
select, .text { width: 100%; height: 24px; border: 1px solid #ccc; border-radius: 4px; background: #fff; color: #555; font: 14px/20px Roboto, sans-serif; padding: 0 6px 4px; appearance: none; box-shadow: inset 0 1px 1px rgba(0,0,0,.075); display: block; }
select { border-color: #66afe9; box-shadow: 0 0 8px rgba(102,175,233,.6); }
.check { display: flex; padding-top: 5px; color: #333; white-space: nowrap; }
.check input { width: 14px; height: 14px; margin: 5px 6px 0 1px; border: 2px solid #8f8f9d; border-radius: 2px; appearance: none; background: #fff; }
.btn { height: 30px; padding: 0 4px; gap: 5px; border-radius: 2px; color: #fff; font-size: 12px; border: 1px solid; }
.buttons { display: flex; gap: 5px; }
.save { background: #1976d2; border-color: #1565c0; }
.download { background: #43a047; border-color: #4caf50; }
.clear { background: #b71c1c; border-color: #c62828; }

table { width: 100%; table-layout: fixed; border-collapse: separate; border-spacing: 0; }
th { text-align: left; padding: 4px 5px 6px; line-height: 20px; border-bottom: 2px solid #ddd; }
td { height: 54px; padding: 5px 4px 7px 10px; vertical-align: top; border-bottom: 1px solid #ddd; }
tr:last-child td { border-bottom: 0; }
tbody tr:nth-child(odd) { background: #f9f9f9; }
.icons { display: flex; align-items: center; gap: 7px; height: 20px; }

footer { margin-top: auto; height: 40px; padding-top: 9px; background: #212121; color: #757575; text-align: center; }
footer a { color: #fff; }
</style>
